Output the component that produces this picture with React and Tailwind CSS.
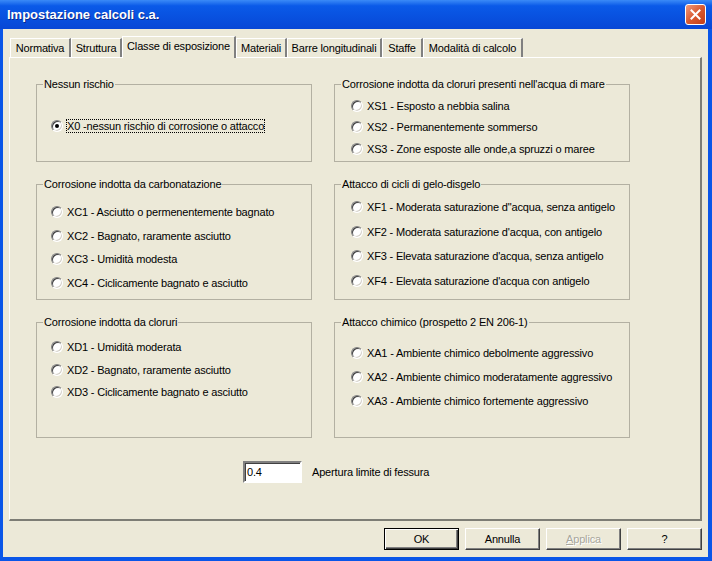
import React from 'react';

const tabs = [
  { label: 'Normativa', w: 'w-[61px]' },
  { label: 'Struttura', w: 'w-[51px]' },
  { label: 'Classe di esposizione', w: 'w-[114px]', active: true },
  { label: 'Materiali', w: 'w-[51px]' },
  { label: 'Barre longitudinali', w: 'w-[95px]' },
  { label: 'Staffe', w: 'w-[41px]' },
  { label: 'Modalità di calcolo', w: 'w-[100px]' },
];

// grid order: left/right per row
const groups = [
  {
    title: 'Nessun rischio',
    pad: 'pl-[14px] pt-[27px]',
    row: 'h-[16px]',
    items: ['X0 -nessun rischio di corrosione o attacco'],
    checked: 0,
  },
  {
    title: "Corrosione indotta da cloruri presenti nell'acqua di mare",
    pad: 'pl-[16px] pt-[4px]',
    row: 'h-[21.5px]',
    items: ['XS1 - Esposto a nebbia salina', 'XS2 - Permanentemente sommerso', 'XS3 - Zone esposte alle onde,a spruzzi o maree'],
  },
  {
    title: 'Corrosione indotta da carbonatazione',
    pad: 'pl-[14px] pt-[9px]',
    row: 'h-[23.7px]',
    items: [
      'XC1 - Asciutto o permenentemente bagnato',
      'XC2 - Bagnato, raramente asciutto',
      'XC3 - Umidità modesta',
      'XC4 - Ciclicamente bagnato e asciutto',
    ],
  },
  {
    title: 'Attacco di cicli di gelo-disgelo',
    pad: 'pl-[16px] pt-[4px]',
    row: 'h-[24.5px]',
    items: [
      'XF1 - Moderata saturazione d"acqua, senza antigelo',
      "XF2 - Moderata saturazione d'acqua, con antigelo",
      "XF3 - Elevata saturazione d'acqua, senza antigelo",
      "XF4 - Elevata saturazione d'acqua con antigelo",
    ],
  },
  {
    title: 'Corrosione indotta da cloruri',
    pad: 'pl-[14px] pt-[7px]',
    row: 'h-[22.5px]',
    items: ['XD1 - Umidità moderata', 'XD2 - Bagnato, raramente asciutto', 'XD3 - Ciclicamente bagnato e asciutto'],
  },
  {
    title: 'Attacco chimico (prospetto 2 EN 206-1)',
    pad: 'pl-[16px] pt-[12px]',
    row: 'h-[24px]',
    items: [
      'XA1 - Ambiente chimico debolmente aggressivo',
      'XA2 - Ambiente chimico moderatamente aggressivo',
      'XA3 - Ambiente chimico fortemente aggressivo',
    ],
  },
];

function Radio({ label, checked }) {
  return (
    <div className="flex items-center gap-[3px]">
      <span className="flex h-[12px] w-[12px] shrink-0 items-center justify-center rounded-full border border-t-[#808080] border-l-[#808080] border-r-white border-b-white bg-white shadow-[inset_1px_1px_0_#404040,inset_-1px_-1px_0_#d4d0c8]">
        {checked && <span className="h-[4px] w-[4px] rounded-full bg-black" />}
      </span>
      <span
        className={`border leading-[12px] whitespace-nowrap ${
          checked ? 'border-dotted border-black' : 'border-transparent'
        }`}
      >
        {label}
      </span>
    </div>
  );
}

function Group({ group }) {
  return (
    <fieldset className="h-full border border-[#b3b0a2]">
      <legend className="ml-[6px] px-[1px] leading-[13px] whitespace-nowrap">{group.title}</legend>
      <div className={`flex flex-col ${group.pad}`}>
        {group.items.map((item, i) => (
          <div key={item} className={`flex items-center ${group.row}`}>
            <Radio label={item} checked={group.checked === i} />
          </div>
        ))}
      </div>
    </fieldset>
  );
}

function Button({ children, primary, disabled }) {
  return (
    <button
      className={`h-[22px] w-[75px] bg-[#ece9d8] text-center ${
        primary
          ? 'border border-black shadow-[inset_1px_1px_0_#fff,inset_-1px_-1px_0_#404040,inset_-2px_-2px_0_#808080]'
          : 'border border-t-white border-l-white border-r-[#404040] border-b-[#404040] shadow-[inset_-1px_-1px_0_#808080]'
      } ${disabled ? 'text-[#a7a69c] [text-shadow:1px_1px_0_#fff]' : 'text-black'}`}
    >
      {children}
    </button>
  );
}

export default function App() {
  return (
    <div className="flex h-[561px] w-[712px] flex-col bg-[#0a56e8] font-['Liberation_Sans',Arial,sans-serif] text-[11px] tracking-[-0.17px] text-black">
      {/* title bar */}
      <div className="flex h-[29px] shrink-0 items-center justify-between bg-linear-to-b from-[#3a8af7] via-[#0a5ae8] via-20% to-[#0847d6] pr-[6px] pl-[7px]">
        <span className="text-[13px] font-bold tracking-normal text-white [text-shadow:1px_1px_0_#0b2a8c]">
          Impostazione calcoli c.a.
        </span>
        <div className="flex h-[21px] w-[21px] items-center justify-center rounded-[3px] border border-white bg-linear-to-br from-[#ee9a7c] via-[#d9592f] to-[#c23e17]">
          <svg width="11" height="11" viewBox="0 0 11 11">
            <path d="M1.5 1.5 L9.5 9.5 M9.5 1.5 L1.5 9.5" stroke="#fff" strokeWidth="2" strokeLinecap="square" />
          </svg>
        </div>
      </div>

      {/* client area */}
      <div className="mb-[4px] ml-[3px] mr-[4px] flex flex-1 flex-col bg-[#ece9d8] px-[6px] pt-[7px]">
        {/* tab strip */}
        <div className="flex h-[21px] items-end pl-[1px]">
          {tabs.map((t) => (
            <div
              key={t.label}
              className={`flex items-center justify-center border-t border-l border-r-2 border-t-white border-l-white border-r-[#808080] whitespace-nowrap ${t.w} ${
                t.active ? 'relative z-10 -mb-[1px] h-[22px] bg-[#ece9d8] pb-[2px]' : 'h-[19px]'
              }`}
            >
              {t.label}
            </div>
          ))}
        </div>

        {/* tab page */}
        <div className="flex h-[464px] flex-col border-t border-l border-r-2 border-b-2 border-t-white border-l-white border-r-[#7d7d75] border-b-[#7d7d75] pt-[20px] pl-[26px]">
          <div className="grid grid-cols-[276px_296px] grid-rows-[84px_122px_122px] gap-x-[22px] gap-y-[16px]">
            {groups.map((g) => (
              <Group key={g.title} group={g} />
            ))}
          </div>

          <div className="mt-[23px] ml-[207px] flex items-center gap-[10px]">
            <div className="flex h-[22px] w-[59px] items-center border-2 border-t-[#808080] border-l-[#808080] border-r-white border-b-white bg-white pl-[2px] shadow-[inset_1px_1px_0_#404040]">
              0.4
            </div>
            <span>Apertura limite di fessura</span>
          </div>
        </div>

        {/* dialog buttons */}
        <div className="flex justify-end gap-[6px] pt-[7px]">
          <Button primary>OK</Button>
          <Button>Annulla</Button>
          <Button disabled>
            <span className="underline">A</span>pplica
          </Button>
          <Button>?</Button>
        </div>
      </div>
    </div>
  );
}
